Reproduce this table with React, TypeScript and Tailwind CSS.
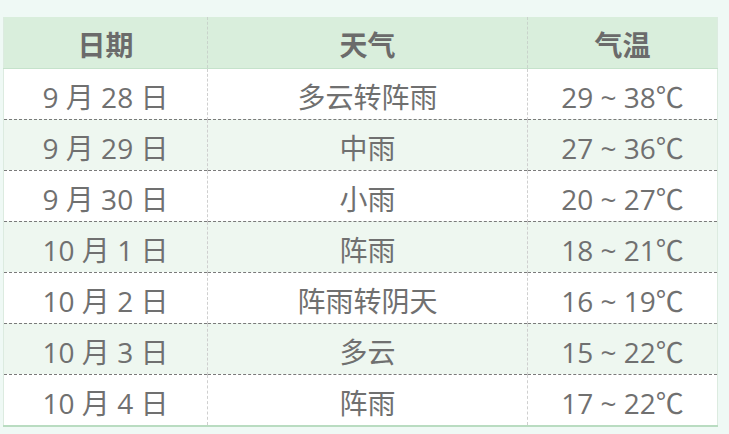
import React from 'react';

const rows = [
  { date: '9 月 28 日', weather: '多云转阵雨', temp: '29 ~ 38℃' },
  { date: '9 月 29 日', weather: '中雨', temp: '27 ~ 36℃' },
  { date: '9 月 30 日', weather: '小雨', temp: '20 ~ 27℃' },
  { date: '10 月 1 日', weather: '阵雨', temp: '18 ~ 21℃' },
  { date: '10 月 2 日', weather: '阵雨转阴天', temp: '16 ~ 19℃' },
  { date: '10 月 3 日', weather: '多云', temp: '15 ~ 22℃' },
  { date: '10 月 4 日', weather: '阵雨', temp: '17 ~ 22℃' },
];

const App = () => {
  return (
    <div
      className="w-[729px] h-[434px] bg-[#eff9f5] pt-[17px] pl-[3px]"
      style={{ fontFamily: '"Open Sans", "Noto Sans CJK SC", sans-serif' }}
    >
      <table className="w-[715px] border-collapse text-center text-[#707070] border-x border-[#dcebe0]">
        <thead>
          <tr className="h-[51px] bg-[#d9eedc] border-b border-[#c5e2cb]">
            <th className="w-[204px] pt-[6px] text-[28px] font-bold text-[#6b6b6b] border-r border-dashed border-[#c9d3cb]">日期</th>
            <th className="w-[320px] pt-[6px] text-[28px] font-bold text-[#6b6b6b] border-r border-dashed border-[#c9d3cb]">天气</th>
            <th className="pt-[6px] text-[28px] font-bold text-[#6b6b6b]">气温</th>
          </tr>
        </thead>
        <tbody>
          {rows.map((r, i) => (
            <tr
              key={r.date}
              className={`h-[51px] text-[28px] ${i % 2 === 0 ? 'bg-white' : 'bg-[#eef7f0]'} ${
                i < rows.length - 1 ? 'border-b border-dashed border-[#7a7a7a]' : 'border-b-2 border-solid border-[#b9dcc1]'
              }`}
            >
              <td className="pt-[6px] leading-[44px] border-r border-dashed border-[#cfcfcf]">{r.date}</td>
              <td className="pt-[6px] leading-[44px] border-r border-dashed border-[#cfcfcf]">{r.weather}</td>
              <td className="pt-[6px] leading-[44px]">{r.temp}</td>
            </tr>
          ))}
        </tbody>
      </table>
    </div>
  );
};

export default App;
